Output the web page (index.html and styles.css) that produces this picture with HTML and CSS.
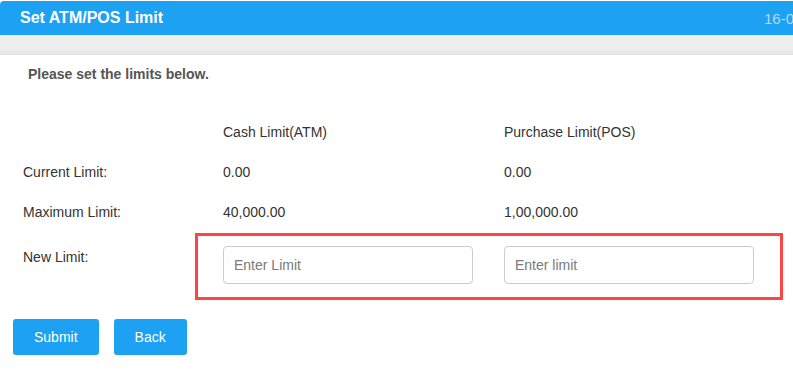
FILE: index.html
```html
<!DOCTYPE html>
<html lang="en">
<head>
  <meta charset="UTF-8">
  <meta name="viewport" content="width=device-width, initial-scale=1.0">
  <title>Set ATM/POS Limit</title>
  <link rel="stylesheet" href="styles.css">
</head>
<body>

  <!-- Page title bar -->
  <div class="title-bar">
    <span class="title">Set ATM/POS Limit</span>
    <span class="date">16-05-2019 11:42:08</span>
  </div>

  <div class="strip"></div>

  <div class="panel">
    <p class="intro">Please set the limits below.</p>

    <div class="limits">
      <div class="row">
        <div class="label"></div>
        <div class="col">Cash Limit(ATM)</div>
        <div class="col">Purchase Limit(POS)</div>
      </div>
      <div class="row">
        <div class="label">Current Limit:</div>
        <div class="col">0.00</div>
        <div class="col">0.00</div>
      </div>
      <div class="row">
        <div class="label">Maximum Limit:</div>
        <div class="col">40,000.00</div>
        <div class="col">1,00,000.00</div>
      </div>
      <div class="row row-new">
        <div class="label label-new">New Limit:</div>
        <div class="new-box">
          <input type="text" class="limit-input" placeholder="Enter Limit">
          <input type="text" class="limit-input" placeholder="Enter limit">
        </div>
      </div>
    </div>

    <div class="actions">
      <button class="btn">Submit</button>
      <button class="btn">Back</button>
    </div>
  </div>

</body>
</html>
```

FILE: styles.css
```css
/* Reset */
* {
  margin: 0;
  padding: 0;
  box-sizing: border-box;
}

body {
  font-family: 'Liberation Sans', Arial, sans-serif;
  font-size: 14px;
  color: #333;
  background: #fff;
  overflow: hidden;
}

/* Title bar */
.title-bar {
  margin-top: 1px;
  height: 34px;
  display: flex;
  align-items: center;
  padding-left: 20px;
  background-color: #1da1f2;
  border-radius: 4px 0 0 0;
  overflow: hidden;
  white-space: nowrap;
}

.title-bar .title {
  flex: 0 0 744px;
  font-size: 16px;
  font-weight: bold;
  color: #fff;
}

.title-bar .date {
  flex-shrink: 0;
  font-size: 15px;
  color: #b0dbf9;
}

/* Grey strip under the title */
.strip {
  height: 20px;
  background: linear-gradient(#eeeeee 65%, #e2e2e2);
}

/* Content */
.panel {
  background: #fff;
  border-radius: 4px 4px 0 0;
  padding: 9px 0 30px 13px;
}

.intro {
  padding-left: 15px;
  font-size: 14px;
  line-height: 20px;
  font-weight: bold;
  color: #555;
}

.limits {
  margin-top: 28px;
  padding-left: 10px;
}

.row {
  display: flex;
  height: 40px;
  align-items: center;
}

.row .label {
  flex: 0 0 200px;
}

.row .col {
  flex: 0 0 281px;
}

.row-new {
  height: auto;
  align-items: flex-start;
  margin-top: 1px;
}

.row-new .label-new {
  flex: 0 0 172px;
  padding-top: 14px;
  line-height: 20px;
}

/* Highlight around the new limit inputs */
.new-box {
  display: flex;
  gap: 31px;
  padding: 10px 26px 13px 25px;
  border: 3px solid #ff4444;
}

.limit-input {
  width: 250px;
  height: 38px;
  padding: 0 10px;
  border: 1px solid #cccccc;
  border-radius: 4px;
  font-family: 'Liberation Sans', Arial, sans-serif;
  font-size: 14px;
  color: #333;
  outline: none;
}

.limit-input::placeholder {
  color: #7a7a7a;
}

/* Buttons */
.actions {
  display: flex;
  gap: 15px;
  margin-top: 19px;
}

.btn {
  height: 36px;
  padding: 0 21px;
  background-color: #1da1f2;
  color: #fff;
  border: none;
  border-radius: 3px;
  font-family: 'Liberation Sans', Arial, sans-serif;
  font-size: 14px;
  cursor: pointer;
}
```
